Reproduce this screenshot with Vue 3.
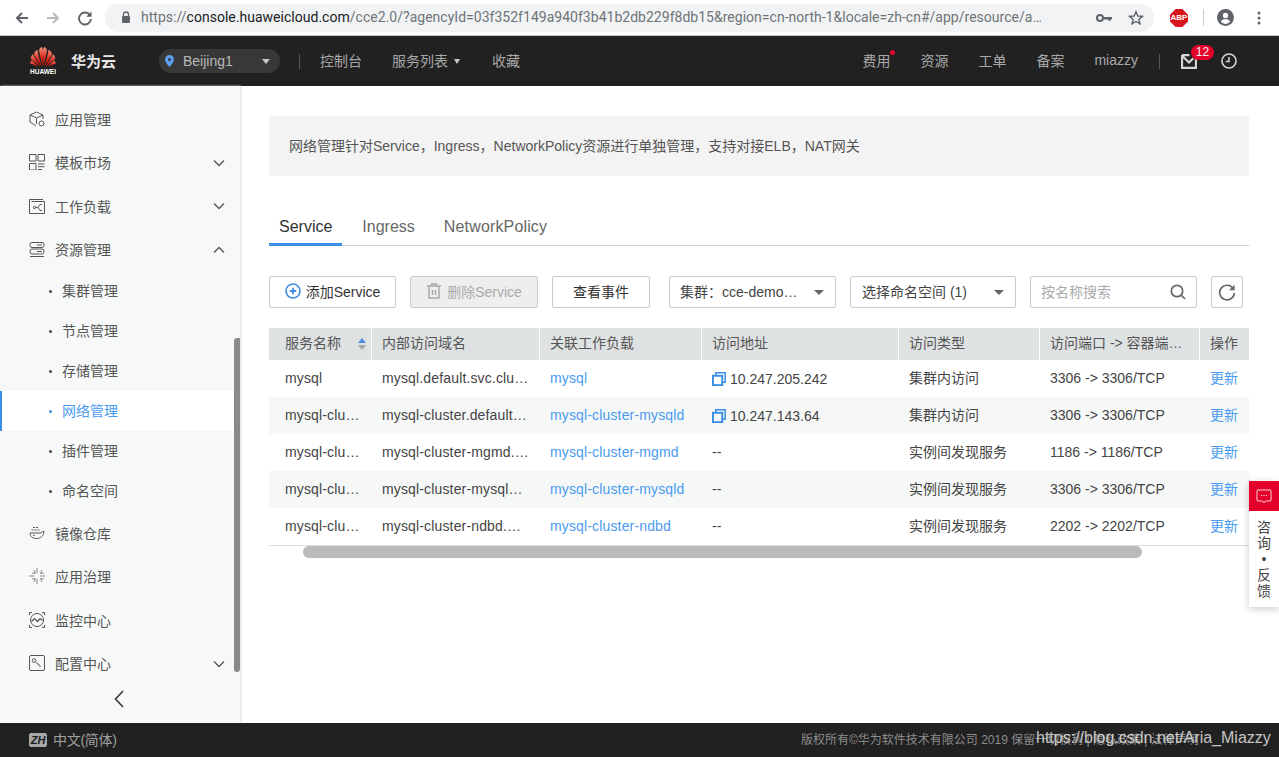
<script setup>
const rows = [
  { n: 'mysql', d: 'mysql.default.svc.clu…', w: 'mysql', ip: '10.247.205.242', t: '集群内访问', p: '3306 -> 3306/TCP' },
  { n: 'mysql-clu…', d: 'mysql-cluster.default…', w: 'mysql-cluster-mysqld', ip: '10.247.143.64', t: '集群内访问', p: '3306 -> 3306/TCP' },
  { n: 'mysql-clu…', d: 'mysql-cluster-mgmd.…', w: 'mysql-cluster-mgmd', ip: '', t: '实例间发现服务', p: '1186 -> 1186/TCP' },
  { n: 'mysql-clu…', d: 'mysql-cluster-mysql…', w: 'mysql-cluster-mysqld', ip: '', t: '实例间发现服务', p: '3306 -> 3306/TCP' },
  { n: 'mysql-clu…', d: 'mysql-cluster-ndbd.…', w: 'mysql-cluster-ndbd', ip: '', t: '实例间发现服务', p: '2202 -> 2202/TCP' }
]
const subs = ['集群管理', '节点管理', '存储管理', '网络管理', '插件管理', '命名空间']
</script>

<template>
  <div class="page">
    <div class="chrome">
      <svg class="cico" width="16" height="16" viewBox="0 0 16 16"><path d="M14 8H3M8 3 3 8l5 5" fill="none" stroke="#5f6368" stroke-width="2"/></svg>
      <svg class="cico f" width="16" height="16" viewBox="0 0 16 16"><path d="M2 8h11M8 3l5 5-5 5" fill="none" stroke="#b6b9bc" stroke-width="2"/></svg>
      <svg class="cico r" width="16" height="16" viewBox="0 0 16 16"><path d="M13.2 5.5A6 6 0 1 0 14 9" fill="none" stroke="#5f6368" stroke-width="1.9"/><path d="M14.5 1.5v5.2H9.3z" fill="#5f6368"/></svg>
      <div class="omni">
        <svg width="10" height="13" viewBox="0 0 10 13"><path d="M2.5 5V3.5a2.5 2.5 0 0 1 5 0V5" fill="none" stroke="#5f6368" stroke-width="1.3"/><rect x="1" y="5" width="8" height="7" rx="1" fill="#5f6368"/></svg>
        <div class="url">https://<b>console.huaweicloud.com</b>/cce2.0/?agencyId=03f352f149a940f3b41b2db229f8db15&amp;region=cn-north-1&amp;locale=zh-cn#/app/resource/a…</div>
        <svg width="17" height="10" viewBox="0 0 17 10"><circle cx="4" cy="5" r="3" fill="none" stroke="#5f6368" stroke-width="2"/><path d="M7 4h9v2.5h-1.6V8h-2V6.500H7z" fill="#5f6368"/></svg>
        <svg class="star" width="16" height="16" viewBox="0 0 16 16"><path d="m8 1.800 1.800 4.200 4.600.4-3.500 3 1.100 4.500L8 11.500l-4 2.400 1.100-4.500-3.500-3 4.600-.4z" fill="none" stroke="#5f6368" stroke-width="1.400"/></svg>
      </div>
      <svg class="abp" width="18" height="18" viewBox="0 0 16 16"><path d="M5 0h6l5 5v6l-5 5H5l-5-5V5z" fill="#d8161d"/></svg>
      <span class="abpt">ABP</span>
      <i class="csep"></i>
      <svg class="ava" width="17" height="17" viewBox="0 0 16 16"><circle cx="8" cy="8" r="8" fill="#5f6368"/><circle cx="8" cy="6" r="2.500" fill="#fff"/><path d="M3.500 12c1-2 2.800-2.600 4.500-2.600s3.500.6 4.500 2.600A6 6 0 0 1 8 14a6 6 0 0 1-4.500-2z" fill="#fff"/></svg>
      <svg class="dots" width="4" height="14" viewBox="0 0 4 14"><circle cx="2" cy="2" r="1.500" fill="#5f6368"/><circle cx="2" cy="7" r="1.500" fill="#5f6368"/><circle cx="2" cy="12" r="1.500" fill="#5f6368"/></svg>
    </div>

    <header class="top">
      <div class="logo">
        <svg width="26" height="20" viewBox="0 0 26 20">
          <defs><linearGradient id="hw" x1="0" y1="0" x2="0" y2="1"><stop offset="0" stop-color="#f0907a"/><stop offset=".55" stop-color="#e02a20"/><stop offset="1" stop-color="#c8100f"/></linearGradient></defs>
          <g fill="url(#hw)">
            <path d="M12.400 19.500 9 3.500C9.600.8 11 .2 12 0c.8 2 1.300 4 1 6.500z"/><path d="M13.600 19.500 17 3.500C16.400.8 15 .2 14 0c-.8 2-1.300 4-1 6.500z"/>
            <path d="M11.600 19.500 3.800 7.500C4.400 4.800 6 3.500 7.500 2.800c.4 4 2 10 4.100 16.700z"/><path d="M14.400 19.500l7.800-12C21.600 4.800 20 3.500 18.500 2.800c-.4 4-2 10-4.100 16.700z"/>
            <path d="M10.800 19.500 .8 12c0-2.200.8-3.800 2-4.800 2 4 5 8 8 12.300z"/><path d="M15.200 19.500 25.200 12c0-2.200-.8-3.800-2-4.800-2 4-5 8-8 12.300z"/>
            <path d="M9.800 19.800 0 16.500c.4-1.400 1.200-2.500 2-3 2 2.300 5 4.500 7.800 6.300z"/><path d="M16.200 19.800l9.800-3.300c-.4-1.400-1.200-2.500-2-3-2 2.300-5 4.500-7.800 6.300z"/>
          </g>
        </svg>
        <span>HUAWEI</span>
      </div>
      <div class="brand">华为云</div>
      <div class="region">
        <svg width="9" height="12" viewBox="0 0 9 12"><path d="M4.500 0a4.400 4.400 0 0 1 4.400 4.400C8.900 7.500 4.500 12 4.500 12S.1 7.500.1 4.400A4.400 4.400 0 0 1 4.500 0z" fill="#5ba0f5"/><circle cx="4.500" cy="4.400" r="1.500" fill="#3a3a3a"/></svg>
        <span class="rn">Beijing1</span><i class="tri"></i>
      </div>
      <i class="tsep s1"></i>
      <nav class="nav">
        <a>控制台</a>
        <a class="svc">服务列表<i class="tri sm"></i></a>
        <a class="fav">收藏</a>
      </nav>
      <nav class="nav right">
        <a class="fee">费用<i class="reddot"></i></a>
        <a>资源</a>
        <a>工单</a>
        <a>备案</a>
        <a class="user">miazzy</a>
      </nav>
      <i class="tsep s2"></i>
      <div class="mail">
        <svg width="16" height="15" viewBox="0 0 15 14"><path d="M1 1v12h13V4M1 1h7M1.500 2 7.500 8l4-4" fill="none" stroke="#d6d6d6" stroke-width="2"/></svg>
        <span class="badge">12</span>
      </div>
      <svg class="clock" width="16" height="16" viewBox="0 0 16 16"><circle cx="8" cy="8" r="7" fill="none" stroke="#d6d6d6" stroke-width="1.600"/><path d="M8 4v4.500H4.800" fill="none" stroke="#d6d6d6" stroke-width="1.500"/></svg>
    </header>

    <div class="body">
      <aside class="side">
        <div class="item">
          <svg width="16" height="16" viewBox="0 0 16 16" class="mi"><path d="M7.500 1 1 4v7l6 4M7.500 1 14 4v4M1 4l6.500 3L14 4M7.500 7v6" fill="none" stroke="#555" stroke-width="1"/><circle cx="12.500" cy="12.500" r="2.500" fill="none" stroke="#555"/></svg>
          <span>应用管理</span>
        </div>
        <div class="item">
          <svg width="16" height="16" viewBox="0 0 16 16" class="mi"><path d="M.5.500h6.500v6.500H.5zM9 .5h6.500v6.500H9zM.5 9.500h6.500V16H.5zM9 10h6.500M9 12.700h6.500M9 15.500h4" fill="none" stroke="#555"/></svg>
          <span>模板市场</span>
          <svg class="chev" width="12" height="8" viewBox="0 0 12 8"><path d="m1 1.500 5 5 5-5" fill="none" stroke="#555" stroke-width="1.300"/></svg>
        </div>
        <div class="item">
          <svg width="16" height="16" viewBox="0 0 16 16" class="mi"><path d="M.5 15.500V1.500H14M2.500 3.500h13v12H.5" fill="none" stroke="#555"/><path d="M6 9.500h3l2-3h2M9 9.500l2 3h2" fill="none" stroke="#555"/><circle cx="5.500" cy="9.500" r="1.200" fill="none" stroke="#555"/></svg>
          <span>工作负载</span>
          <svg class="chev" width="12" height="8" viewBox="0 0 12 8"><path d="m1 1.500 5 5 5-5" fill="none" stroke="#555" stroke-width="1.300"/></svg>
        </div>
        <div class="item">
          <svg width="16" height="16" viewBox="0 0 16 16" class="mi"><rect x="1" y="1.500" width="14" height="5" rx="2" fill="none" stroke="#555"/><rect x="1" y="8" width="14" height="5" rx="2" fill="none" stroke="#555"/><path d="M1 15.500h14M8 4h5M8 10.500h5" stroke="#555" fill="none"/></svg>
          <span>资源管理</span>
          <svg class="chev" width="12" height="8" viewBox="0 0 12 8"><path d="m1 6.500 5-5 5 5" fill="none" stroke="#555" stroke-width="1.300"/></svg>
        </div>
        <div v-for="s in subs" :key="s" class="sub" :class="{ on: s === '网络管理' }"><i></i>{{ s }}</div>
        <div class="item">
          <svg width="16" height="16" viewBox="0 0 16 16" class="mi"><path d="M1 8h11c.5-1 1.500-1.500 3-1.500-.3 4-3 7-7.500 7C3.500 13.500 1 11.500 1 8zM2.500 5h2M5.500 5h2M8.500 5h2M4 2.500h2M7 2.500h2" fill="none" stroke="#555"/><circle cx="5" cy="10.500" r=".8" fill="#555"/></svg>
          <span>镜像仓库</span>
        </div>
        <div class="item">
          <svg width="16" height="16" viewBox="0 0 16 16" class="mi"><path d="M8 0v5M8 11v5M0 8h5M11 8h5M5 2l1.500 3.500L3 5M13 2l-1.500 3.500L15 5M5 14l1.500-3.500L3 11M13 14l-1.500-3.500L15 11" fill="none" stroke="#888"/></svg>
          <span>应用治理</span>
        </div>
        <div class="item">
          <svg width="16" height="16" viewBox="0 0 16 16" class="mi"><circle cx="8" cy="8" r="6.500" fill="none" stroke="#555"/><path d="M.5 3V.5H3M13 .5h2.500V3M.5 13v2.500H3M13 15.500h2.500V13" fill="none" stroke="#555"/><path d="m2.500 9.500 3-3 3 3 2.500-3 2.500 2" fill="none" stroke="#555" stroke-width="1.200"/></svg>
          <span>监控中心</span>
        </div>
        <div class="item">
          <svg width="16" height="16" viewBox="0 0 16 16" class="mi"><rect x=".5" y=".5" width="15" height="15" rx="1.500" fill="none" stroke="#555"/><circle cx="5" cy="5.500" r="1.800" fill="none" stroke="#555"/><path d="m6.500 7 5 4M9.500 9.500l-1 1M11.500 11l-1 1" fill="none" stroke="#555"/></svg>
          <span>配置中心</span>
          <svg class="chev" width="12" height="8" viewBox="0 0 12 8"><path d="m1 1.500 5 5 5-5" fill="none" stroke="#555" stroke-width="1.300"/></svg>
        </div>
        <div class="collapse">
          <svg width="10" height="18" viewBox="0 0 10 18"><path d="M9 1 1.500 9 9 17" fill="none" stroke="#333" stroke-width="1.500"/></svg>
        </div>
        <div class="sthumb"></div>
      </aside>

      <main class="main">
        <div class="banner">网络管理针对Service，Ingress，NetworkPolicy资源进行单独管理，支持对接ELB，NAT网关</div>
        <div class="tabs">
          <div class="tab on">Service</div>
          <div class="tab">Ingress</div>
          <div class="tab np">NetworkPolicy</div>
        </div>
        <div class="tools">
          <button class="btn add">
            <svg width="16" height="16" viewBox="0 0 16 16"><circle cx="8" cy="8" r="7" fill="none" stroke="#3a8ee6" stroke-width="1.600"/><path d="M8 4.800v6.400M4.800 8h6.400" stroke="#3a8ee6" stroke-width="1.800"/></svg>
            添加Service
          </button>
          <button class="btn del">
            <svg width="16" height="16" viewBox="0 0 16 16"><path d="M1 3h14M5.500 3V1h5v2M3 3v12h10V3M6.500 7v5M9.500 7v5" fill="none" stroke="#aaa" stroke-width="1.500"/></svg>
            删除Service
          </button>
          <button class="btn evt">查看事件</button>
          <div class="sel s-a"><span>集群：cce-demo…</span><i class="tri gray"></i></div>
          <div class="sel s-b"><span>选择命名空间 (1)</span><i class="tri gray"></i></div>
          <div class="search">
            <span>按名称搜索</span>
            <svg width="16" height="16" viewBox="0 0 16 16"><circle cx="7" cy="7" r="5.700" fill="none" stroke="#666" stroke-width="1.700"/><path d="m11 11 4 4" stroke="#666" stroke-width="1.700"/></svg>
          </div>
          <button class="btn ref">
            <svg width="18" height="18" viewBox="0 0 16 16"><path d="M13.500 5A6.500 6.500 0 1 0 14.500 9" fill="none" stroke="#666" stroke-width="1.500"/><path d="M14.800 1.500v5h-5z" fill="#666"/></svg>
          </button>
        </div>
        <div class="table">
          <div class="tr head">
            <div class="c1 sortc"><span>服务名称</span>
              <svg width="8" height="12" viewBox="0 0 8 12"><path d="M4 0 8 5H0z" fill="#4a90e2"/><path d="M4 12 0 7h8z" fill="#a8a8a8"/></svg>
            </div>
            <div class="c2">内部访问域名</div>
            <div class="c3">关联工作负载</div>
            <div class="c4">访问地址</div>
            <div class="c5">访问类型</div>
            <div class="c6">访问端口 -&gt; 容器端…</div>
            <div class="c7">操作</div>
          </div>
          <div v-for="(r, i) in rows" :key="i" class="tr row">
            <div class="c1 lat">{{ r.n }}</div>
            <div class="c2 lat">{{ r.d }}</div>
            <div class="c3 lat link">{{ r.w }}</div>
            <div class="c4 ipc" :class="{ dash: !r.ip }">
              <template v-if="r.ip">
                <svg width="14" height="14" viewBox="0 0 13 13"><path d="M3.500 3.500V.8h8.700v8.700H9.500" fill="none" stroke="#3a8ee6" stroke-width="1.400"/><rect x=".9" y="3.500" width="8.600" height="8.700" fill="none" stroke="#3a8ee6" stroke-width="1.800"/></svg>
                {{ r.ip }}
              </template>
              <template v-else>--</template>
            </div>
            <div class="c5 cjk">{{ r.t }}</div>
            <div class="c6 port">{{ r.p }}</div>
            <div class="c7 cjk link">更新</div>
          </div>
        </div>
        <div class="hbar"><i></i></div>
      </main>

      <div class="feedback">
        <div class="fb-icon">
          <svg width="16" height="15" viewBox="0 0 16 15"><path d="M2 1h12a1 1 0 0 1 1 1v9a1 1 0 0 1-1 1H9.500L8 14l-1.500-2H2a1 1 0 0 1-1-1V2a1 1 0 0 1 1-1z" fill="none" stroke="#fbd5db"/><path d="M5 6.500h1M7.500 6.500h1M10 6.500h1" stroke="#fff"/></svg>
        </div>
        <div class="fb-text"><span>咨</span><span>询</span><span>•</span><span>反</span><span>馈</span></div>
      </div>
    </div>

    <footer class="foot">
      <span class="zh">ZH</span>
      <span class="lang">中文(简体)</span>
      <span class="copy">版权所有©华为软件技术有限公司 2019 保留一切权利 | 隐私政策 | 法律声明</span>
      <span class="mark">https://blog.csdn.net/Aria_Miazzy</span>
    </footer>
  </div>
</template>

<style>
html, body { margin: 0; padding: 0; overflow: hidden; }
</style>

<style scoped>
.page { width: 1279px; height: 757px; display: flex; flex-direction: column; overflow: hidden; background: #fff; font-family: "Liberation Sans", "Noto Sans CJK SC", sans-serif; font-size: 14px; color: #333; }
i { display: block; font-style: normal; }

.chrome { height: 35px; border-bottom: 1px solid #c8c8c8; flex: none; display: flex; align-items: center; background: #fff; }
.cico { margin-left: 14px; flex: none; }
.cico.f { margin-left: 15px; }
.cico.r { margin-left: 16px; }
.omni { margin-left: 12px; width: 1049px; height: 28px; border-radius: 14px; background: #f1f3f4; display: flex; align-items: center; padding-left: 16px; box-sizing: border-box; flex: none; }
.url { width: 955px; margin-left: 10px; padding-bottom: 2px; font: 14px Roboto, "Liberation Sans", sans-serif; color: #6f7377; white-space: nowrap; overflow: hidden; letter-spacing: .02px; }
.url b { font-weight: 400; color: #202124; }
.star { margin-left: 15px; }
.abp { margin-left: 16px; flex: none; }
.abpt { margin-left: -18px; width: 18px; text-align: center; font: bold 8px "Liberation Sans", sans-serif; color: #fff; position: relative; }
.csep { width: 1px; height: 17px; background: #ccc; margin-left: 15px; }
.ava { margin-left: 13px; }
.dots { margin-left: 23px; }

.top { height: 50px; flex: none; background: #212121; display: flex; align-items: center; color: #b5b5b5; }
.logo { width: 26px; margin-left: 30px; display: flex; flex-direction: column; align-items: center; }
.logo svg { display: block; }
.logo span { font: bold 6.500px/9px "Liberation Sans", sans-serif; color: #fff; }
.brand { margin-left: 15px; width: 46px; padding-bottom: 2px; font-size: 15px; font-weight: 700; color: #e8e8e8; white-space: nowrap; }
.region { margin-left: 42px; width: 121px; height: 24px; box-sizing: border-box; padding: 0 10px 0 6px; border-radius: 12px; background: #383838; display: flex; align-items: center; }
.rn { margin-left: 9px; flex: 1; color: #b8b8b8; font-size: 14px; }
.tri { width: 0; height: 0; border-left: 4px solid transparent; border-right: 4px solid transparent; border-top: 5px solid #c8c8c8; }
.tri.sm { display: inline-block; margin-left: 6px; vertical-align: 2px; border-left-width: 3.500px; border-right-width: 3.500px; }
.tsep { width: 1px; height: 15px; background: #555; flex: none; }
.s1 { margin-left: 19px; }
.nav { display: flex; align-items: center; margin-left: 20px; padding-bottom: 2px; }
.nav a { color: #a8a8a8; font-size: 14px; white-space: nowrap; }
.svc { margin-left: 30px; }
.fav { margin-left: 32px; }
.nav.right { margin-left: auto; gap: 30px; }
.fee { position: relative; }
.reddot { position: absolute; right: -5px; top: 0; width: 5px; height: 5px; border-radius: 50%; background: #e4002b; }
.s2 { margin-left: 21px; }
.mail { position: relative; margin-left: 21px; width: 16px; height: 15px; display: flex; }
.badge { position: absolute; left: 10px; top: -9px; width: 23px; height: 15px; border-radius: 8px; background: #e4002b; color: #f3f3f3; font-size: 12px; line-height: 15px; text-align: center; }
.clock { margin-left: 24px; margin-right: 42px; }

.body { flex: 1; display: flex; position: relative; min-height: 0; }
.side { width: 240px; flex: none; box-sizing: border-box; padding-top: 11px; background: #f7f9f9; box-shadow: 1px 0 2px #dcdcdc; position: relative; overflow: hidden; color: #555; }
.item { height: 43.500px; display: flex; align-items: center; padding-left: 29px; position: relative; }
.item span { margin-left: 10px; font-size: 14px; color: #555; }
.mi { flex: none; }
.chev { position: absolute; left: 213px; top: 18px; }
.sub { height: 40px; box-sizing: border-box; padding-bottom: 2px; display: flex; align-items: center; padding-left: 62px; position: relative; font-size: 14px; color: #555; }
.sub i { position: absolute; left: 49px; top: 19px; width: 3px; height: 3px; border-radius: 50%; background: #444; }
.sub.on { background: #fff; color: #4a9bf0; width: 234px; border-left: 2px solid #3a8ee6; padding-left: 60px; }
.sub.on i { background: #3a8ee6; left: 47px; }
.collapse { height: 28px; display: flex; align-items: center; justify-content: center; padding-right: 3px; }
.sthumb { position: absolute; left: 234px; top: 252px; width: 6px; height: 334px; background: #8a8a8a; border-radius: 3px 0 3px 3px; }

.main { flex: 1; min-width: 0; padding: 30px 30px 0 29px; display: flex; flex-direction: column; }
.banner { height: 60px; flex: none; box-sizing: border-box; padding: 0 0 2px 20px; display: flex; align-items: center; background: #f3f3f3; color: #555; font-size: 14px; white-space: nowrap; }
.tabs { margin-top: 32px; height: 38px; display: flex; flex: none; border-bottom: 1px solid #ccc; box-sizing: border-box; }
.tab { font-size: 16px; line-height: 38px; color: #666; margin-right: 29px; }
.tab:first-child { padding: 0 10px; margin-right: 20px; }
.tab.on { color: #333; border-bottom: 3px solid #3a8ee6; height: 38px; box-sizing: border-box; }
.tab.np { letter-spacing: .15px; }
.tools { margin-top: 30px; height: 32px; display: flex; align-items: center; flex: none; }
.btn { height: 32px; box-sizing: border-box; border: 1px solid #c8ccd0; border-radius: 2px; background: #fff; color: #333; font: 14px "Liberation Sans", "Noto Sans CJK SC", sans-serif; display: flex; align-items: center; justify-content: center; padding: 0 0 2px; }
.add { width: 127px; gap: 5px; }
.del { width: 128px; margin-left: 14px; background: #eee; color: #aaa; gap: 5px; }
.evt { width: 98px; margin-left: 14px; }
.ref { padding: 0; }
.sel { height: 32px; box-sizing: border-box; border: 1px solid #c8ccd0; border-radius: 2px; display: flex; align-items: center; justify-content: space-between; padding: 0 11px 0 10px; color: #444; white-space: nowrap; }
.sel span { margin-bottom: 2px; }
.tri.gray { border-top-color: #666; border-left-width: 5px; border-right-width: 5px; }
.s-a { width: 167px; margin-left: 19px; }
.s-b { width: 166px; margin-left: 14px; padding-left: 11px; }
.search { width: 167px; height: 32px; margin-left: 14px; box-sizing: border-box; border: 1px solid #c8ccd0; border-radius: 2px; display: flex; align-items: center; justify-content: space-between; padding: 0 10px; color: #aaa; }
.search span { margin-bottom: 2px; }
.ref { width: 32px; margin-left: 14px; }

.table { margin-top: 20px; flex: none; border-bottom: 1px solid #ddd; }
.tr { display: grid; grid-template-columns: 103px 168px 162px 197px 141px 160px 49px; }
.tr > div { display: flex; align-items: center; box-sizing: border-box; white-space: nowrap; overflow: hidden; }
.head { height: 32px; background: #dfe2e3; }
.head > div { color: #555; border-right: 1px solid #fff; padding: 0 0 4px 10px; }
.head .c7 { border-right: 0; }
.head .c1 { padding-left: 16px; }
.head .sortc { justify-content: space-between; padding-right: 5px; padding-bottom: 0; }
.sortc span { margin-bottom: 4px; }
.row { height: 37px; }
.row:nth-child(odd) { background: #f6f8f8; }
.row > div { padding-left: 10px; color: #444; }
.row .c1 { padding-left: 16px; }
.row > .lat { letter-spacing: .15px; padding-bottom: 2px; }
.row > .cjk { padding-bottom: 4px; }
.row > .port, .row > .dash { padding-bottom: 2px; }
.row > .link { color: #4a9bf0; }
.ipc { gap: 4px; }
.ipc svg { margin-top: 1px; flex: none; }
.hbar { height: 12px; flex: none; padding: 0 107px 0 34px; }
.hbar i { height: 12px; border-radius: 6px; background: #bbb; }

.feedback { position: absolute; right: 0; top: 395px; width: 30px; height: 126px; background: #fff; box-shadow: 0 2px 8px rgba(0, 0, 0, .2); }
.fb-icon { height: 30px; background: #e4002b; display: flex; align-items: center; justify-content: center; }
.fb-text { display: flex; flex-direction: column; align-items: center; padding-top: 8px; font-size: 14px; line-height: 16px; color: #444; }

.foot { height: 34px; flex: none; background: #212121; display: flex; align-items: center; position: relative; color: #a0a0a0; overflow: hidden; }
.zh { margin-left: 29px; width: 18px; height: 14px; border-radius: 2px; background: #a8a8a8; color: #212121; font: italic bold 11px/14px "Liberation Sans", sans-serif; text-align: center; }
.lang { margin-left: 6px; margin-bottom: 2px; font-size: 14px; letter-spacing: -.3px; }
.copy { position: absolute; left: 801px; top: 9px; font-size: 12px; line-height: 16px; white-space: nowrap; color: #8d8d8d; }
.mark { position: absolute; left: 1036px; top: 4px; font-size: 16px; line-height: 22px; color: #e0e0e0; white-space: nowrap; opacity: .85; }
</style>
